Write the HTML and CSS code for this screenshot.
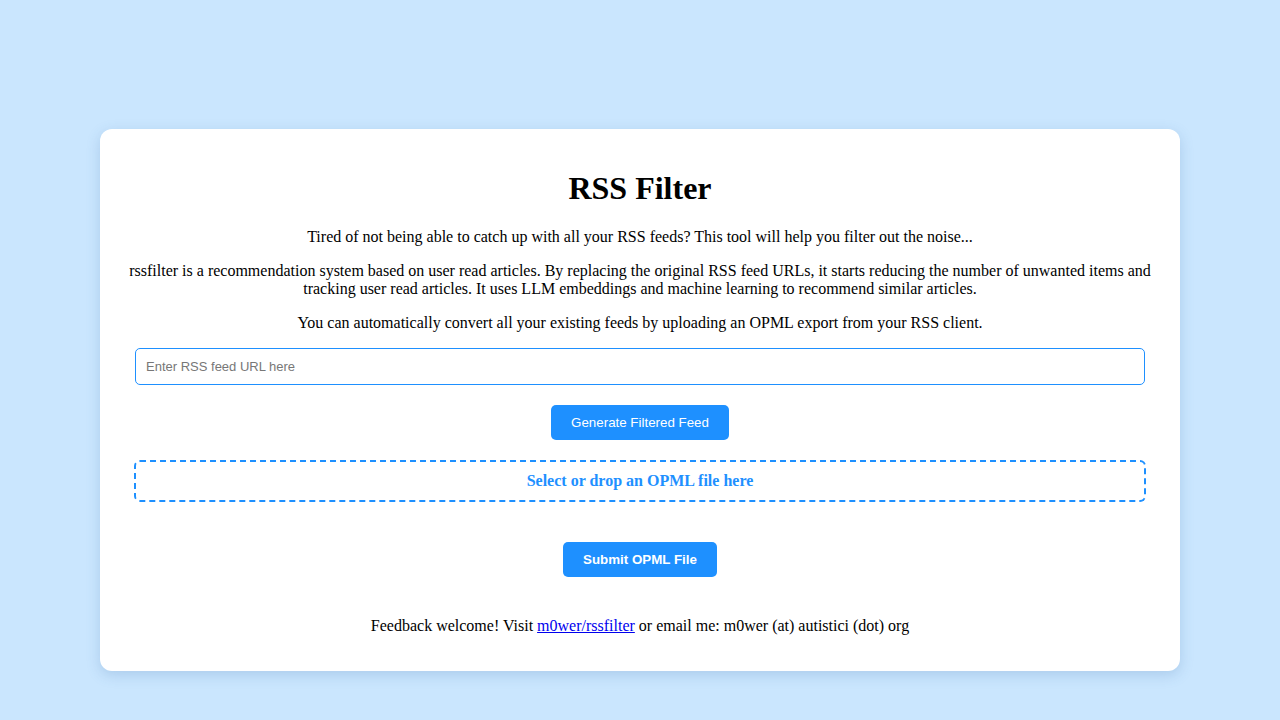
FILE: index.html
```html
<!DOCTYPE html>
<html>
<head>
<meta charset="utf-8">
<title>RSS Filter</title>
<link rel="stylesheet" href="styles.css">
</head>
<body>
<div class="page">
  <main class="card">
    <h1 class="title">RSS Filter</h1>
    <p class="text">Tired of not being able to catch up with all your RSS feeds? This tool will help you filter out the noise...</p>
    <p class="text">rssfilter is a recommendation system based on user read articles. By replacing the original RSS feed URLs, it starts reducing the number of unwanted items and tracking user read articles. It uses LLM embeddings and machine learning to recommend similar articles.</p>
    <p class="text">You can automatically convert all your existing feeds by uploading an OPML export from your RSS client.</p>
    <form class="feed-form">
      <input class="url-input" type="text" placeholder="Enter RSS feed URL here">
      <button class="btn" type="button">Generate Filtered Feed</button>
    </form>
    <form class="opml-form">
      <label class="dropzone">Select or drop an OPML file here</label>
      <button class="btn btn-bold" type="button">Submit OPML File</button>
    </form>
    <p class="footer">Feedback welcome! Visit <a href="#">m0wer/rssfilter</a> or email me: m0wer (at) autistici (dot) org</p>
  </main>
</div>
</body>
</html>
```

FILE: styles.css
```css
html, body {
  margin: 0;
  padding: 0;
}
body {
  background: #cae6fe;
  font-family: "Liberation Serif", "Times New Roman", serif;
  color: #000;
  height: 720px;
  overflow: hidden;
}
.page {
  padding: 129px 100px 0;
}
.card {
  background: #fff;
  border-radius: 12px;
  box-shadow: 0 4px 14px rgba(60, 110, 170, 0.22);
  padding: 20px 24px 20px;
  text-align: center;
  height: 542px;
  box-sizing: border-box;
}
.title {
  font-size: 32px;
  margin: 21px 0 21px;
}
.text {
  font-size: 16px;
  line-height: 18px;
  margin: 16px 0;
}
.feed-form {
  display: flex;
  flex-direction: column;
  align-items: center;
  gap: 20px;
  margin-top: 16px;
}
.url-input {
  width: 1010px;
  height: 37px;
  box-sizing: border-box;
  border: 1px solid #1e90ff;
  border-radius: 5px;
  padding: 0 10px;
  font-family: "Liberation Sans", Arial, sans-serif;
  font-size: 13px;
  outline: none;
}
.url-input::placeholder {
  color: #777;
}
.btn {
  background: #1e90ff;
  color: #fff;
  border: none;
  border-radius: 5px;
  height: 35px;
  padding: 0 20px;
  font-family: "Liberation Sans", Arial, sans-serif;
  font-size: 13.33px;
  cursor: pointer;
}
.btn-bold {
  font-weight: bold;
}
.opml-form {
  display: flex;
  flex-direction: column;
  align-items: center;
  gap: 40px;
  margin-top: 20px;
}
.dropzone {
  width: 1012px;
  height: 42px;
  box-sizing: border-box;
  border: 2px dashed #1e90ff;
  border-radius: 6px;
  color: #1e90ff;
  font-weight: bold;
  font-size: 16px;
  display: flex;
  align-items: center;
  justify-content: center;
}
.footer {
  font-size: 16px;
  margin: 40px 0 0;
}
.footer a {
  color: #0000ee;
}
```
